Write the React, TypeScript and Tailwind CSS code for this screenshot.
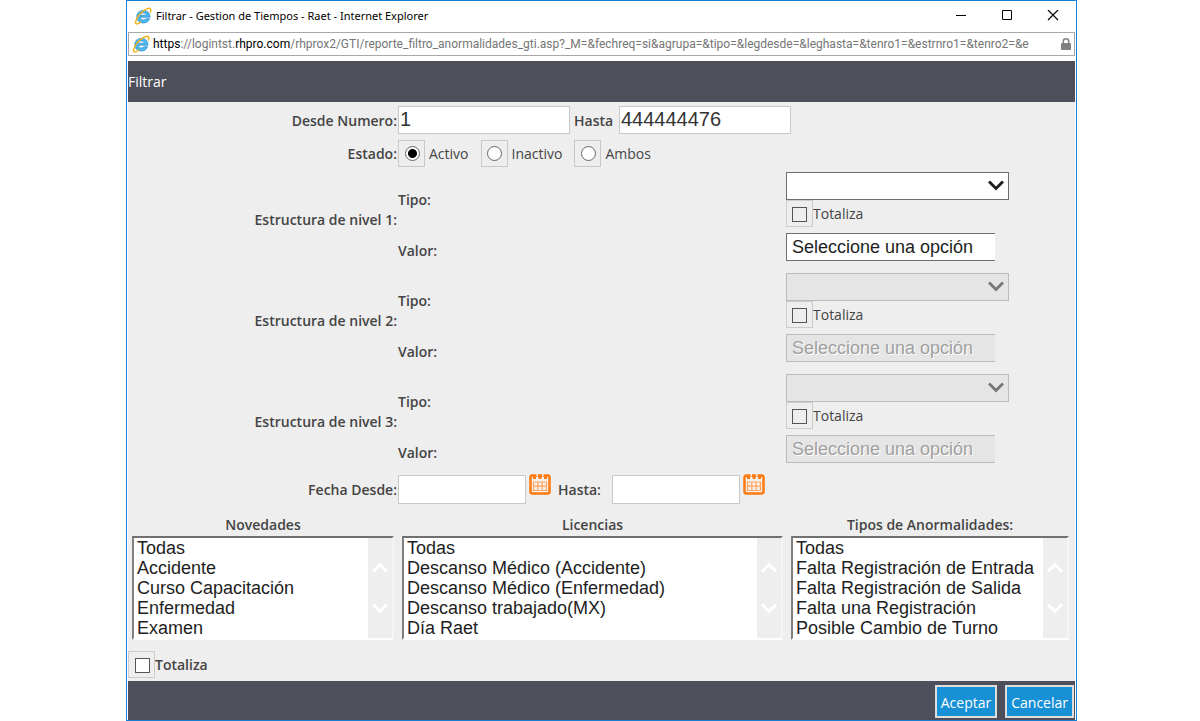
import clsx from "clsx";

const LISTS = [
  {
    id: "novedades",
    label: "Novedades",
    options: ["Todas", "Accidente", "Curso Capacitación", "Enfermedad", "Examen"],
  },
  {
    id: "licencias",
    label: "Licencias",
    options: [
      "Todas",
      "Descanso Médico (Accidente)",
      "Descanso Médico (Enfermedad)",
      "Descanso trabajado(MX)",
      "Día Raet",
    ],
  },
  {
    id: "anormalidades",
    label: "Tipos de Anormalidades:",
    options: [
      "Todas",
      "Falta Registración de Entrada",
      "Falta Registración de Salida",
      "Falta una Registración",
      "Posible Cambio de Turno",
    ],
  },
];

function BrowserIcon() {
  return (
    <svg viewBox="0 0 18 18" className="size-[18px] shrink-0" aria-hidden="true">
      <path
        d="M16 10.300H6.200c.2 1.700 1.400 2.600 3.100 2.600 1.200 0 2.100-.4 2.600-1.200h3.700c-.9 2.700-3.200 4.300-6.300 4.300C5.400 16 2.700 13.400 2.700 9.700S5.400 3.400 9.300 3.400c4.100 0 6.900 2.700 6.700 6.900zM6.300 8.200h6C12.100 6.700 11 5.900 9.300 5.900S6.600 6.700 6.300 8.200z"
        fill="#4ab8f0"
        stroke="#1b80c4"
        strokeWidth=".6"
      />
      <path
        d="M3 11.500C1.300 14.500 1 16.400 2.300 16.800c1.100.3 2.900-.5 4.500-1.800M2.700 11.700C4.300 7.700 9.900 2.600 14.200 1.500c2.600-.7 3.100.9 2.100 3.500"
        fill="none"
        stroke="#f3b41b"
        strokeWidth="1.500"
        strokeLinecap="round"
      />
    </svg>
  );
}

function CalendarIcon() {
  return (
    <svg viewBox="0 0 22 22" className="size-[22px]" aria-hidden="true">
      <rect x="1.500" y="1.500" width="19" height="18" rx="2" fill="#f4f1ee" stroke="#ff7a10" strokeWidth="2.500" />
      <path d="M1 1h20v2H1zM4 1h3v4H4zM9.500 1h3v4h-3zM15 1h3v4h-3z" fill="#ff7a10" />
      <path d="M7.500 0h1.500v2.500H7.500zM13 0h1.500v2.500H13z" fill="#f4f1ee" />
      <path d="M4.500 8h13v8.500h-13zM4.500 12.200h13M8.800 8v8.500M13.200 8v8.500" fill="none" stroke="#ffa45c" strokeWidth="1.200" />
    </svg>
  );
}

function Chevron({ up, className }: { up?: boolean; className?: string }) {
  return (
    <svg viewBox="0 0 16 12" className={clsx("h-3 w-4", className)} aria-hidden="true">
      <path d={up ? "M1 9.500 8 2.500l7 7" : "M1 2.500 8 9.500l7-7"} fill="none" stroke="currentColor" strokeWidth="3" />
    </svg>
  );
}

function CheckBox({ id, white }: { id: string; white?: boolean }) {
  return (
    <span
      className={clsx(
        "flex size-[27px] shrink-0 items-center justify-center border border-[#ccc] pt-px",
        white && "pl-px"
      )}
    >
      <input
        id={id}
        type="checkbox"
        className={clsx(
          "size-[15px] appearance-none border border-[#555] checked:bg-[#333]",
          white ? "bg-white" : "bg-[#eee]"
        )}
      />
    </span>
  );
}

function Radio({ id, label, checked }: { id: string; label: string; checked?: boolean }) {
  return (
    <div className="flex items-center">
      <span className="flex size-[27px] items-center justify-center border border-[#c8c8c8] pl-px">
        <input
          id={id}
          type="radio"
          name="estado"
          defaultChecked={checked}
          className="size-[15px] appearance-none rounded-full border border-[#666] bg-white checked:bg-[radial-gradient(circle,#000_4px,#fff_5px)]"
        />
      </span>
      <label htmlFor={id} className="pl-1">
        {label}
      </label>
    </div>
  );
}

function Nivel({ n, disabled }: { n: number; disabled?: boolean }) {
  return (
    <fieldset className="grid grid-cols-[270px_388px_1fr] grid-rows-[60px_41px]">
      <div className="row-span-2 self-center pr-px pb-0.5 text-right font-semibold">Estructura de nivel {n}:</div>
      <label htmlFor={`tipo${n}`} className="self-center font-semibold">
        Tipo:
      </label>
      <div className="pt-0.5">
        <div className="relative w-[223px]">
          <select
            id={`tipo${n}`}
            disabled={disabled}
            className="block h-7 w-full appearance-none border border-[#6e6e6e] bg-white opacity-100 disabled:border-[#bbb] disabled:bg-[#e5e5e5]"
          >
            <option></option>
          </select>
          <Chevron
            className={clsx("pointer-events-none absolute top-[7px] right-[5px]", disabled ? "text-[#777]" : "text-[#1e1e1e]")}
          />
        </div>
        <div className="flex items-center">
          <CheckBox id={`totaliza${n}`} />
          <label htmlFor={`totaliza${n}`}>Totaliza</label>
        </div>
      </div>
      <label htmlFor={`valor${n}`} className="self-center font-semibold">
        Valor:
      </label>
      <div className="pt-[3px]">
        <input
          id={`valor${n}`}
          disabled={disabled}
          readOnly
          value="Seleccione una opción"
          className="block h-7 w-[209px] border border-r-0 border-[#6e6e6e] bg-white px-[5px] font-['Liberation_Sans',sans-serif] text-lg/6 text-[#1e1e1e] disabled:border-[#bbb] disabled:bg-[#e5e5e5] disabled:text-[#a0a0a0] disabled:[text-shadow:1px_1px_0_#fff]"
        />
      </div>
    </fieldset>
  );
}

function ListBox({ id, label, options }: { id: string; label: string; options: string[] }) {
  return (
    <div>
      <label htmlFor={id} className="block pt-px pb-px text-center leading-5 font-semibold">
        {label}
      </label>
      <div className="flex h-[104px] border-2 border-t-[#707070] border-r-[#f4f4f4] border-b-white border-l-[#808080] bg-[#eee]">
        <select
          id={id}
          multiple
          size={5}
          className="min-w-0 flex-1 overflow-hidden bg-white p-0 font-['Liberation_Sans',sans-serif] text-lg/5 text-[#1e1e1e]"
        >
          {options.map((option) => (
            <option key={option} className="h-5 min-h-0 p-0 pl-[3px]">
              {option}
            </option>
          ))}
        </select>
        <div className="flex w-6 flex-col items-center justify-center gap-7 text-white">
          <Chevron up />
          <Chevron />
        </div>
      </div>
    </div>
  );
}

function DateField({ id }: { id: string }) {
  return (
    <>
      <input id={id} type="text" className="h-[29px] w-32 border border-[#c8c8c8] bg-white px-1" />
      <button type="button" aria-label="Calendario" className="-mt-px ml-[3px] self-start">
        <CalendarIcon />
      </button>
    </>
  );
}

export default function App() {
  return (
    <div className="min-h-screen bg-white pl-[3px] font-['Open_Sans',sans-serif] text-sm text-[#444]">
      <div className="mx-auto w-full max-w-[951px] border border-[#1a7fd0] bg-white">
        {/* Title bar */}
        <div className="flex h-[31px] items-center pr-[17px] pb-0.5 pl-[7px] text-black">
          <BrowserIcon />
          <h1 className="flex-1 pl-1 font-['Noto_Sans',sans-serif] text-[11px]">
            Filtrar - Gestion de Tiempos - Raet - Internet Explorer
          </h1>
          <div className="flex gap-[34px]">
            <button type="button" aria-label="Minimizar">
              <svg viewBox="0 0 12 12" className="size-3">
                <path d="M1 5.500h10" stroke="#000" />
              </svg>
            </button>
            <button type="button" aria-label="Maximizar">
              <svg viewBox="0 0 12 12" className="size-3">
                <path d="M1.500 .5h9v9h-9z" fill="none" stroke="#000" />
              </svg>
            </button>
            <button type="button" aria-label="Cerrar">
              <svg viewBox="0 0 12 12" className="size-3">
                <path d="m1 0 10 10M11 0 1 10" stroke="#000" strokeWidth="1.200" />
              </svg>
            </button>
          </div>
        </div>

        {/* Address bar */}
        <div className="mx-px mb-[5px] flex h-6 items-center border border-[#a8a8a8] px-[3px] text-xs">
          <BrowserIcon />
          <div className="min-w-0 flex-1 pl-[3px] font-['Roboto',sans-serif] whitespace-nowrap text-[#767676]">
            <span className="text-black">https</span>://logintst.<span className="text-black">rhpro.com</span>
            /rhprox2/GTI/reporte_filtro_anormalidades_gti.asp?_M=&amp;fechreq=si&amp;agrupa=&amp;tipo=&amp;legdesde=&amp;leghasta=&amp;tenro1=&amp;estrnro1=&amp;tenro2=&amp;e
          </div>
          <svg viewBox="0 0 10 12" className="h-3 w-2.5 shrink-0" aria-hidden="true">
            <rect y="5" width="10" height="7" rx="1" fill="#808080" />
            <path d="M2.300 6V3.500a2.700 2.700 0 0 1 5.400 0V6" fill="none" stroke="#808080" strokeWidth="1.500" />
          </svg>
        </div>

        <form className="mx-px bg-[#eee]">
          <h2 className="flex h-[41px] items-center bg-[#4d505b] text-white">Filtrar</h2>

          <div className="grid grid-cols-[270px_1fr] items-center pt-1">
            <label htmlFor="desde" className="pt-0.5 pr-px text-right font-semibold">
              Desde Numero:
            </label>
            <div className="flex h-7 items-center">
              <input
                id="desde"
                defaultValue="1"
                className="h-7 w-[172px] border border-[#c8c8c8] bg-white px-px pb-0.5 font-['Liberation_Sans',sans-serif] text-xl text-[#333]"
              />
              <label htmlFor="hasta" className="w-[49px] pt-0.5 pl-1 font-semibold">
                Hasta
              </label>
              <input
                id="hasta"
                defaultValue="444444476"
                className="h-7 w-[172px] border border-[#c8c8c8] bg-white px-px pb-0.5 font-['Liberation_Sans',sans-serif] text-xl text-[#333]"
              />
            </div>
          </div>

          <div className="grid grid-cols-[270px_1fr] items-center pt-1.5 pb-[3px]">
            <span className="pr-px text-right font-semibold">Estado:</span>
            <div className="flex gap-3">
              <Radio id="activo" label="Activo" checked />
              <Radio id="inactivo" label="Inactivo" />
              <Radio id="ambos" label="Ambos" />
            </div>
          </div>

          <Nivel n={1} />
          <Nivel n={2} disabled />
          <Nivel n={3} disabled />

          <div className="grid grid-cols-[270px_1fr] items-center pt-0.5 pb-2">
            <label htmlFor="fechaDesde" className="pr-px text-right font-semibold">
              Fecha Desde:
            </label>
            <div className="flex items-center">
              <DateField id="fechaDesde" />
              <label htmlFor="fechaHasta" className="w-[61px] pl-[7px] font-semibold">
                Hasta:
              </label>
              <DateField id="fechaHasta" />
            </div>
          </div>

          <div className="grid grid-cols-[262px_381px_1fr] gap-2 pt-0.5 pr-1.5 pl-1">
            {LISTS.map((list) => (
              <ListBox key={list.id} {...list} />
            ))}
          </div>

          <div className="flex items-center pt-[11px] pb-[3px]">
            <CheckBox id="totaliza" white />
            <label htmlFor="totaliza" className="font-semibold">
              Totaliza
            </label>
          </div>

          <div className="flex h-[39px] items-center justify-end gap-2 bg-[#4d505b] pt-px pr-px text-white">
            <button type="button" className="h-[33px] border-2 border-[#ddd] bg-[#1790d6] px-1 pt-[3px]">
              Aceptar
            </button>
            <button type="button" className="h-[33px] border-2 border-[#ddd] bg-[#1790d6] px-1 pt-[3px]">
              Cancelar
            </button>
          </div>
        </form>
      </div>
    </div>
  );
}
